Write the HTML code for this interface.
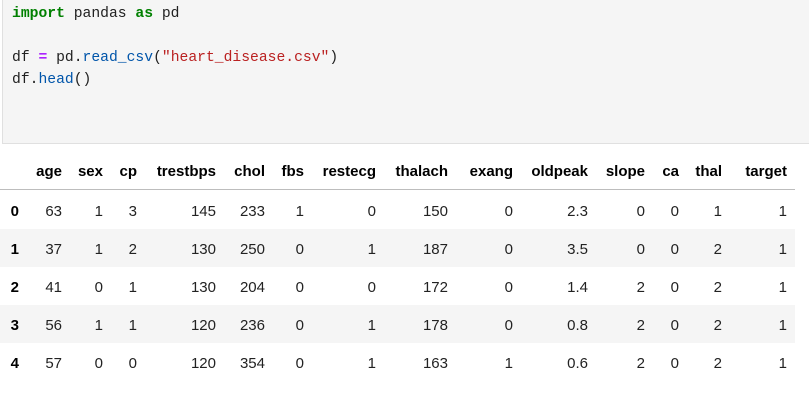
<!DOCTYPE html>
<html><head><meta charset="utf-8"><style>
*{margin:0;padding:0;box-sizing:border-box}
body{width:809px;height:405px;background:#fff;position:relative;overflow:hidden;font-family:"Liberation Sans",sans-serif;color:#000}
.code{position:absolute;left:2px;top:0;width:807px;height:144px;background:#f5f5f5;border:1px solid #e0e0e0;border-top:none;border-right:none}
.code pre{position:absolute;left:9px;top:3px;font-family:"Liberation Mono",monospace;font-size:14.7px;line-height:22px;color:#212121}
.k{color:#008000;font-weight:bold}.o{color:#aa22ff;font-weight:bold}.f{color:#0055aa}.s{color:#ba2121}
.stripe{position:absolute;left:0;width:795px;height:38px;background:#f5f5f5}
.hr{position:absolute;left:0;top:189px;width:795px;height:1px;background:#bdbdbd}
.c{position:absolute;font-size:15px;line-height:20px;white-space:nowrap;transform:translateX(-100%);color:#222}
.b{font-weight:bold;color:#000}
</style></head><body>
<div class="code"><pre><span class="k">import</span> pandas <span class="k">as</span> pd

df <span class="o">=</span> pd.<span class="f">read_csv</span>(<span class="s">"heart_disease.csv"</span>)
df.<span class="f">head</span>()</pre></div>
<div class="stripe" style="top:229px"></div>
<div class="stripe" style="top:305px"></div>
<div class="hr"></div>
<div id="t"></div>
<script>
var R=[62,103,137,216,265,304,376,448,513,588,645,679,722,787];
var H=["age","sex","cp","trestbps","chol","fbs","restecg","thalach","exang","oldpeak","slope","ca","thal","target"];
var D=[[63,1,3,145,233,1,0,150,0,"2.3",0,0,1,1],[37,1,2,130,250,0,1,187,0,"3.5",0,0,2,1],[41,0,1,130,204,0,0,172,0,"1.4",2,0,2,1],[56,1,1,120,236,0,1,178,0,"0.8",2,0,2,1],[57,0,0,120,354,0,1,163,1,"0.6",2,0,2,1]];
var h="";
H.forEach(function(x,i){h+='<span class="c b" style="left:'+R[i]+'px;top:162px">'+x+'</span>';});
D.forEach(function(r,j){var y=202+38*j;h+='<span class="c b" style="left:19px;top:'+y+'px">'+j+'</span>';
r.forEach(function(x,i){h+='<span class="c" style="left:'+R[i]+'px;top:'+y+'px">'+x+'</span>';});});
document.getElementById("t").innerHTML=h;
</script>
</body></html>
